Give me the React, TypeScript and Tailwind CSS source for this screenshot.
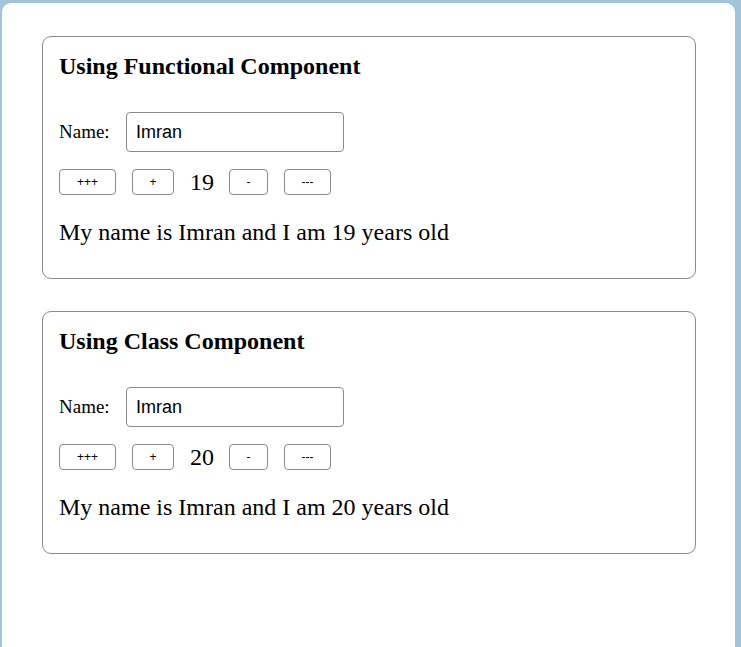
import React from "react";

function Card({ title, age }: { title: string; age: number }) {
  return (
    <div className="border border-[#8a8a8a] rounded-[9px] pl-[16px] pr-4 pt-[13px] pb-[30px]">
      <h3 className="text-[24px] font-bold leading-[32px] m-0">{title}</h3>
      <div className="flex items-center mt-[30px]">
        <span className="text-[19px] w-[67px]">Name:</span>
        <div className="w-[218px] h-[40px] border border-[#8a8a8a] rounded-[4px] flex items-center pl-[9px] text-[18px] font-['Liberation_Sans',Arial,sans-serif]">
          Imran
        </div>
      </div>
      <div className="flex items-center mt-[17px] h-[26px]">
        <button className="w-[57px] h-[26px] border border-[#8a8a8a] rounded-[4px] text-[12px] font-['Liberation_Sans',Arial,sans-serif] flex items-center justify-center">+++</button>
        <button className="ml-[16px] w-[42px] h-[26px] border border-[#8a8a8a] rounded-[4px] text-[12px] font-['Liberation_Sans',Arial,sans-serif] flex items-center justify-center">+</button>
        <span className="ml-[16px] w-[40px] text-[24px]">{age}</span>
        <button className="-ml-[1px] w-[39px] h-[26px] border border-[#8a8a8a] rounded-[4px] text-[12px] font-['Liberation_Sans',Arial,sans-serif] flex items-center justify-center">-</button>
        <button className="ml-[16px] w-[47px] h-[26px] border border-[#8a8a8a] rounded-[4px] text-[12px] font-['Liberation_Sans',Arial,sans-serif] flex items-center justify-center">---</button>
      </div>
      <p className="mt-[21px] text-[24px] leading-[32px]">My name is Imran and I am {age} years old</p>
    </div>
  );
}

export default function App() {
  return (
    <div className="w-[741px] h-[647px] bg-[#a3c3d8] pt-[3px] pl-[2px] pr-[6px] overflow-hidden font-['Liberation_Serif','Times_New_Roman',serif] text-black">
      <div className="bg-white h-[700px] rounded-t-[9px] pl-[40px] pr-[39px] pt-[33px] flex flex-col gap-[32px]">
        <Card title="Using Functional Component" age={19} />
        <Card title="Using Class Component" age={20} />
      </div>
    </div>
  );
}
